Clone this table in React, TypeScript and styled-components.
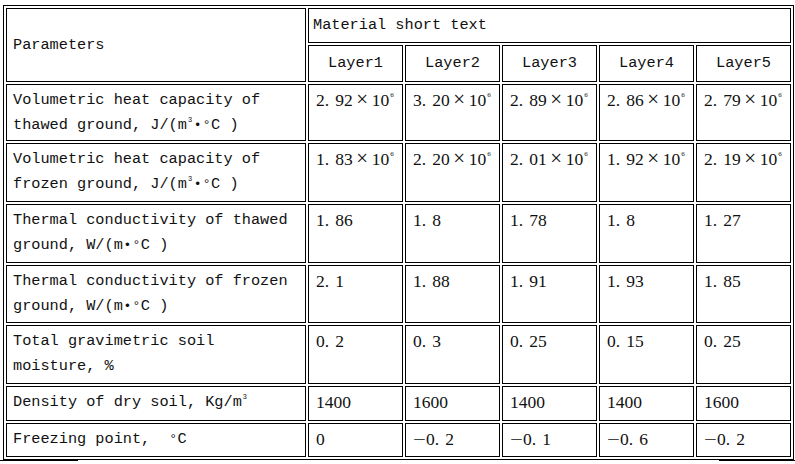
import React from "react";
import styled, { createGlobalStyle } from "styled-components";

const Global = createGlobalStyle`
  html, body { margin: 0; padding: 0; background: #fff; }
  body { width: 795px; height: 464px; overflow: hidden; }
`;

const Page = styled.div`
  position: relative;
  width: 795px;
  height: 464px;
  padding: 5px 0 0 3px;
  box-sizing: border-box;
  &::before {
    content: "";
    position: absolute;
    left: 0;
    top: 460px;
    width: 78px;
    height: 1px;
    background: #000;
  }
  &::after {
    content: "";
    position: absolute;
    left: 719px;
    top: 460px;
    width: 76px;
    height: 1px;
    background: #000;
  }
`;

const Table = styled.table`
  width: 791px;
  box-sizing: border-box;
  table-layout: fixed;
  border-collapse: separate;
  border-spacing: 2px;
  border: 1px solid #000;
  color: #000;
`;

const Col = styled.col<{ $w: number }>`
  width: ${(p) => p.$w}px;
`;

const Row = styled.tr<{ $h: number }>`
  height: ${(p) => p.$h}px;
`;

const Cell = styled.td<{ $align?: "left" | "center"; $valign?: "top" | "middle"; $pl?: number }>`
  border: 1px solid #000;
  box-sizing: border-box;
  padding: ${(p) => (p.$valign === "middle" ? 0 : 3)}px 6px 0 ${(p) => p.$pl ?? 6}px;
  text-align: ${(p) => p.$align ?? "left"};
  vertical-align: ${(p) => p.$valign ?? "top"};
  font-family: "Liberation Mono", "DejaVu Sans Mono", monospace;
  font-size: 15.25px;
  line-height: 25px;
  white-space: pre;
  overflow: hidden;
  color: #111;
`;

const Line = styled.div`
  display: block;
  height: 25px;
`;

const NumCell = styled(Cell)`
  font-family: "Liberation Serif", "DejaVu Serif", serif;
  font-size: 17.5px;
  white-space: nowrap;
  padding-left: 7px;
`;

const Dot = styled.span`
  display: inline-block;
  width: 0.6em;
`;

const Minus = styled.span`
  display: inline-block;
  width: 13px;
  text-align: left;
  transform: scaleX(1.3);
  transform-origin: left center;
`;

const Times = styled.span`
  display: inline-block;
  width: 19px;
  text-align: center;
  font-size: 21px;
  line-height: 1;
`;

const Exp = styled.span`
  display: inline-block;
  font-size: 7px;
  line-height: 1;
  vertical-align: 9px;
  margin-left: 1px;
`;

const Sup = styled.span`
  display: inline-block;
  font-size: 7px;
  line-height: 1;
  vertical-align: 7px;
  margin: 0 1px;
`;

const Unit = styled.span`
  display: inline-block;
  font-size: 13px;
  line-height: 1;
  width: 9px;
  text-align: center;
`;

const Val = ({ t, sci }: { t: string; sci?: boolean }) => {
  const neg = t.startsWith("-");
  const s = neg ? t.slice(1) : t;
  const [a, b] = s.split(".");
  return (
    <>
      {neg && <Minus>−</Minus>}
      {a}
      {b !== undefined && (
        <>
          <Dot>.</Dot>
          {b}
        </>
      )}
      {sci && (
        <>
          <Times>×</Times>10<Exp>6</Exp>
        </>
      )}
    </>
  );
};

const heatUnit = (
  <>
    J/(m<Sup>3</Sup>
    <Unit>•</Unit>
    <Unit>°</Unit>C )
  </>
);

const condUnit = (
  <>
    W/(m<Unit>•</Unit>
    <Unit>°</Unit>C )
  </>
);

type RowData = { lines: React.ReactNode[]; values: string[]; sci?: boolean; h: number };

const rows: RowData[] = [
  {
    lines: ["Volumetric heat capacity of", <>thawed ground, {heatUnit}</>],
    values: ["2.92", "3.20", "2.89", "2.86", "2.79"],
    sci: true,
    h: 57,
  },
  {
    lines: ["Volumetric heat capacity of", <>frozen ground, {heatUnit}</>],
    values: ["1.83", "2.20", "2.01", "1.92", "2.19"],
    sci: true,
    h: 59,
  },
  {
    lines: ["Thermal conductivity of thawed", <>ground, {condUnit}</>],
    values: ["1.86", "1.8", "1.78", "1.8", "1.27"],
    h: 59,
  },
  {
    lines: ["Thermal conductivity of frozen", <>ground, {condUnit}</>],
    values: ["2.1", "1.88", "1.91", "1.93", "1.85"],
    h: 58,
  },
  {
    lines: ["Total gravimetric soil", "moisture, %"],
    values: ["0.2", "0.3", "0.25", "0.15", "0.25"],
    h: 59,
  },
  {
    lines: [
      <>
        Density of dry soil, Kg/m<Sup>3</Sup>
      </>,
    ],
    values: ["1400", "1600", "1400", "1400", "1600"],
    h: 35,
  },
  {
    lines: [
      <>
        {"Freezing point,  "}
        <Unit>°</Unit>C
      </>,
    ],
    values: ["0", "-0.2", "-0.1", "-0.6", "-0.2"],
    h: 34,
  },
];

export default function App() {
  return (
    <Page>
      <Global />
      <Table>
        <colgroup>
          <Col $w={300} />
          <Col $w={95} />
          <Col $w={95} />
          <Col $w={95} />
          <Col $w={95} />
          <Col $w={95} />
        </colgroup>
        <tbody>
          <Row $h={35}>
            <Cell rowSpan={2} $valign="middle">
              Parameters
            </Cell>
            <Cell colSpan={5} $valign="middle" $pl={4}>
              Material short text
            </Cell>
          </Row>
          <Row $h={37}>
            {[1, 2, 3, 4, 5].map((n) => (
              <Cell key={n} $valign="middle" $align="center">
                Layer{n}
              </Cell>
            ))}
          </Row>
          {rows.map((r, i) => (
            <Row key={i} $h={r.h}>
              <Cell>
                {r.lines.map((l, k) => (
                  <Line key={k}>{l}</Line>
                ))}
              </Cell>
              {r.values.map((v, j) => (
                <NumCell key={j}>
                  <Val t={v} sci={r.sci} />
                </NumCell>
              ))}
            </Row>
          ))}
        </tbody>
      </Table>
    </Page>
  );
}
